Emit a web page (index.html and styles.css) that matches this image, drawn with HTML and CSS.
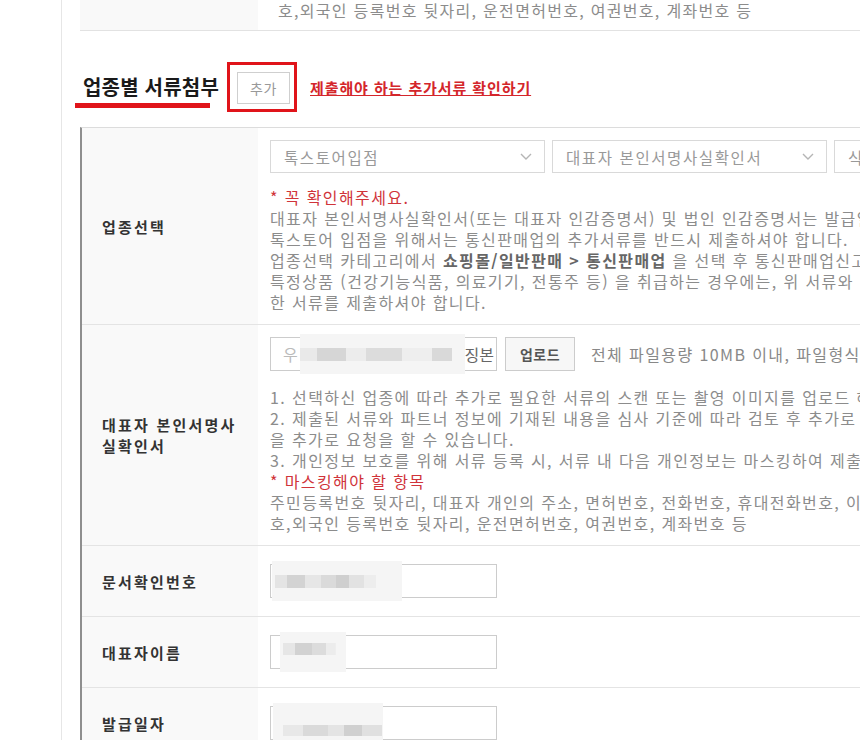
FILE: index.html
```html
<!DOCTYPE html>
<html lang="ko">
<head>
    <meta charset="UTF-8">
    <title>업종별 서류첨부</title>
    <link rel="stylesheet" href="styles.css">
</head>
<body>
    <div class="page">
        <div class="prev-row">
            <div class="prev-label"></div>
            <div class="prev-text">호,외국인 등록번호 뒷자리, 운전면허번호, 여권번호, 계좌번호 등</div>
        </div>

        <div class="section-head">
            <h2 class="section-title">업종별 서류첨부</h2>
            <span class="mark-box"><button class="btn-add">추가</button></span>
            <a href="#" class="doc-link">제출해야 하는 추가서류 확인하기</a>
        </div>

        <div class="form-table">
            <div class="row">
                <div class="th">업종선택</div>
                <div class="td">
                    <div class="selects">
                        <div class="select">
                            <span>톡스토어입점</span>
                            <svg class="chev" width="12" height="7" viewBox="0 0 12 7"><path d="M1 1l5 5 5-5" fill="none" stroke="#b5b5b5" stroke-width="1.4"/></svg>
                        </div>
                        <div class="select">
                            <span>대표자 본인서명사실확인서</span>
                            <svg class="chev" width="12" height="7" viewBox="0 0 12 7"><path d="M1 1l5 5 5-5" fill="none" stroke="#b5b5b5" stroke-width="1.4"/></svg>
                        </div>
                        <div class="select">
                            <span>식품 관련 서류</span>
                            <svg class="chev" width="12" height="7" viewBox="0 0 12 7"><path d="M1 1l5 5 5-5" fill="none" stroke="#b5b5b5" stroke-width="1.4"/></svg>
                        </div>
                    </div>
                    <div class="notes">
                        <span class="red">* 꼭 확인해주세요.</span><br>
                        대표자 본인서명사실확인서(또는 대표자 인감증명서) 및 법인 인감증명서는 발급일로부터 3개월 이내의 서류만 유효합니다.<br>
                        톡스토어 입점을 위해서는 통신판매업의 추가서류를 반드시 제출하셔야 합니다.<br>
                        업종선택 카테고리에서 <b>쇼핑몰/일반판매 &gt; 통신판매업</b> 을 선택 후 통신판매업신고증을 제출해주세요.<br>
                        특정상품 (건강기능식품, 의료기기, 전통주 등) 을 취급하는 경우에는, 위 서류와 더불어 해당 상품 판매에 필요<br>
                        한 서류를 제출하셔야 합니다.
                    </div>
                </div>
            </div>

            <div class="row">
                <div class="th">대표자 본인서명사<br>실확인서</div>
                <div class="td">
                    <div class="upload-line">
                        <div class="file-box">
                            <span class="faint">우</span>
                            <span class="mask mask-file"></span>
                            <span>징본</span>
                        </div>
                        <button class="btn-upload">업로드</button>
                        <span class="upload-info">전체 파일용량 10MB 이내, 파일형식 : jpg, jpeg, gif, png, pdf</span>
                    </div>
                    <div class="notes">
                        1. 선택하신 업종에 따라 추가로 필요한 서류의 스캔 또는 촬영 이미지를 업로드 해주세요.<br>
                        2. 제출된 서류와 파트너 정보에 기재된 내용을 심사 기준에 따라 검토 후 추가로 증빙<br>
                        을 추가로 요청을 할 수 있습니다.<br>
                        3. 개인정보 보호를 위해 서류 등록 시, 서류 내 다음 개인정보는 마스킹하여 제출해주세요.<br>
                        <span class="red">* 마스킹해야 할 항목</span><br>
                        주민등록번호 뒷자리, 대표자 개인의 주소, 면허번호, 전화번호, 휴대전화번호, 이메일 주소, 여권번<br>
                        호,외국인 등록번호 뒷자리, 운전면허번호, 여권번호, 계좌번호 등
                    </div>
                </div>
            </div>

            <div class="row">
                <div class="th">문서확인번호</div>
                <div class="td">
                    <div class="text-box"><span class="mask mask-doc"></span></div>
                </div>
            </div>

            <div class="row">
                <div class="th">대표자이름</div>
                <div class="td">
                    <div class="text-box"><span class="mask mask-name"></span></div>
                </div>
            </div>

            <div class="row">
                <div class="th">발급일자</div>
                <div class="td">
                    <div class="text-box"><span class="mask mask-date"></span></div>
                </div>
            </div>
        </div>
    </div>
</body>
</html>
```

FILE: styles.css
```css
body {
    margin: 0;
    overflow: hidden;
    background: #fff;
    font-family: "Noto Sans CJK KR", "Noto Sans", sans-serif;
    color: #333;
}

.page {
    margin-left: 61px;
    border-left: 1px solid #e6e6e6;
    padding-left: 18px;
    width: 1100px;
    min-height: 740px;
}

/* 이전 섹션 끝부분 */
.prev-row {
    display: flex;
    height: 30px;
    border-bottom: 1px solid #e2e2e2;
}
.prev-label {
    width: 178px;
    background: #f9f9f9;
}
.prev-text {
    padding-left: 20px;
    font-size: 16px;
    line-height: 21px;
    letter-spacing: 1.3px;
    color: #8c8c8c;
    white-space: nowrap;
}

/* 섹션 제목 */
.section-head {
    display: flex;
    align-items: center;
    padding: 31px 0 15px 3px;
}
.section-title {
    position: relative;
    margin: 0 8px 0 0;
    font-size: 20px;
    line-height: 24px;
    font-weight: bold;
    letter-spacing: 0.2px;
    color: #1a1a1a;
}
.section-title::after {
    content: "";
    position: absolute;
    left: -8px;
    bottom: -9px;
    width: 135px;
    height: 5px;
    background: #e0141a;
}
.mark-box {
    display: inline-flex;
    border: 3px solid #e0141a;
    padding: 7px 4px 5px 7px;
}
.btn-add {
    width: 53px;
    height: 32px;
    border: 1px solid #cfcfcf;
    background: #fff;
    color: #999;
    font-family: inherit;
    font-size: 14px;
    letter-spacing: 0.5px;
    padding: 0;
}
.doc-link {
    margin-left: 13px;
    color: #d4262b;
    font-size: 15px;
    font-weight: bold;
    letter-spacing: 0.9px;
    text-decoration: underline;
}

/* 입력 테이블 */
.form-table {
    border-top: 1px solid #dcdcdc;
    border-left: 2px solid #8f8f8f;
}
.row {
    display: grid;
    grid-template-columns: 176px 1fr;
    border-bottom: 1px solid #e4e4e4;
}
.th {
    display: flex;
    align-items: center;
    padding-left: 20px;
    background: #f9f9f9;
    font-size: 15px;
    line-height: 21px;
    font-weight: bold;
    letter-spacing: 2.2px;
    color: #333;
}
.td {
    padding: 12px 0 11px 12px;
    font-size: 16px;
    letter-spacing: 1.4px;
    color: #8c8c8c;
}
.selects {
    display: flex;
    gap: 7px;
}
.select {
    width: 275px;
    height: 33px;
    box-sizing: border-box;
    border: 1px solid #d9d9d9;
    padding: 0 12px 0 13px;
    display: flex;
    align-items: center;
    justify-content: space-between;
    font-size: 15.5px;
    letter-spacing: 1.6px;
    color: #999;
    white-space: nowrap;
}
.notes {
    margin-top: 14px;
    line-height: 21px;
    white-space: nowrap;
}
.notes b {
    color: #666;
}
.red {
    color: #d0343a;
}

.upload-line {
    display: flex;
    align-items: center;
    white-space: nowrap;
}
.file-box {
    width: 227px;
    height: 34px;
    box-sizing: border-box;
    border: 1px solid #cccccc;
    padding: 0 2px 0 12px;
    display: flex;
    align-items: center;
    color: #666;
    letter-spacing: 0;
}
.faint {
    color: #bbb;
}
.btn-upload {
    margin-left: 8px;
    width: 70px;
    height: 34px;
    border: 1px solid #cccccc;
    background: #f7f7f7;
    color: #555;
    font-family: inherit;
    font-size: 14px;
    font-weight: bold;
    letter-spacing: 0.5px;
    padding: 0;
}
.upload-info {
    margin-left: 16px;
    color: #888;
}
.row + .row .notes {
    margin-top: 16px;
}

.text-box {
    width: 227px;
    height: 34px;
    box-sizing: border-box;
    border: 1px solid #cccccc;
    margin: 6px 0 7px;
    display: flex;
    align-items: center;
}

/* 개인정보 가림 처리 */
.mask {
    display: block;
    height: 40px;
    margin: -4px 0;
    background-color: #f5f5f5;
    background-repeat: no-repeat;
    background-position: 0 50%;
    background-size: 100% 13px;
}
.mask-file {
    flex: 1;
    margin-left: 2px;
    background-image: linear-gradient(90deg, #e9e9e9 0 10%, #d6d6d6 10% 28%, #ececec 28% 40%, #dcdcdc 40% 62%, #eeeeee 62% 80%, #d9d9d9 80% 92%, #f5f5f5 92%);
}
.mask-doc {
    width: 130px;
    margin-left: 1px;
    background-size: 78% 13px;
    background-position: 3px 50%;
    background-image: linear-gradient(90deg, #e4e4e4 0 12%, #d3d3d3 12% 30%, #e6e6e6 30% 45%, #dadada 45% 60%, #cfcfcf 60% 73%, #e2e2e2 73% 88%, #ededed 88%);
}
.mask-name {
    width: 66px;
    margin-left: 9px;
    background-size: 80% 12px;
    background-position: 3px 40%;
    background-image: linear-gradient(90deg, #e6e6e6 0 22%, #d2d2d2 22% 55%, #dcdcdc 55% 82%, #ececec 82%);
}
.mask-date {
    width: 110px;
    margin-left: 2px;
    background-size: 90% 11px;
    background-position: 10px 75%;
    background-image: linear-gradient(90deg, #e8e8e8 0 20%, #dadada 20% 45%, #e4e4e4 45% 62%, #d0d0d0 62% 80%, #e0e0e0 80%);
}
```
